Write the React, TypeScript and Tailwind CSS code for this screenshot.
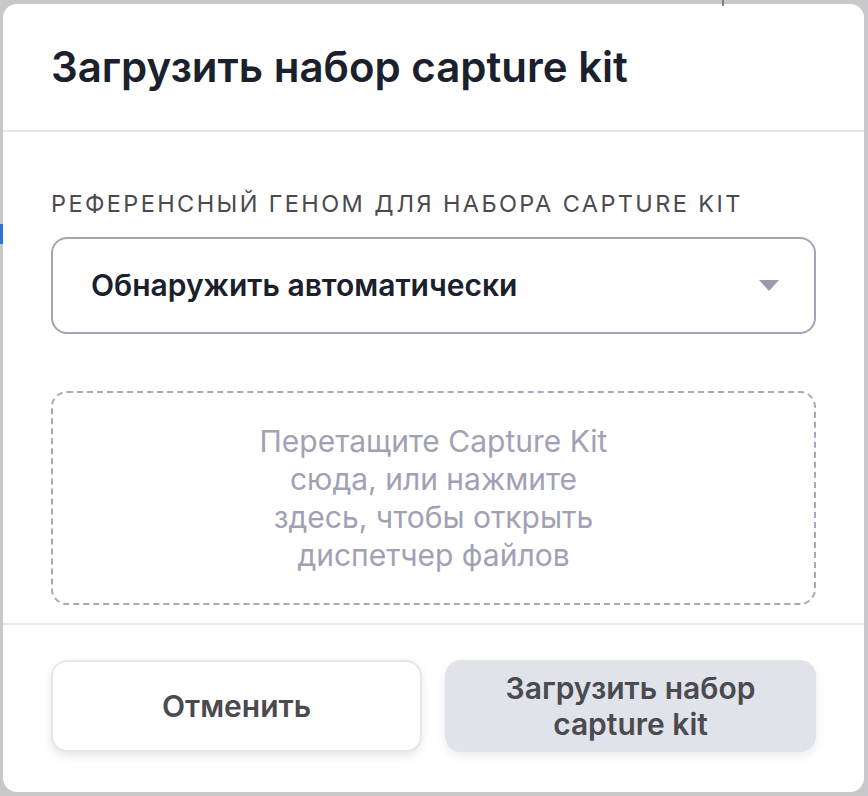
import React from "react";

export default function App() {
  return (
    <div
      className="relative h-[796px] w-[868px] overflow-hidden bg-[#c8c8ca] pt-[4px] pl-[3px] pr-[4px]"
      style={{ fontFamily: "Inter, 'Noto Sans', sans-serif" }}
    >
      <div className="absolute left-[722px] top-0 h-[6px] w-[2px] bg-[#7a7f8c]" />
      <div className="absolute left-0 top-[224px] h-[20px] w-[3px] bg-[#2f6fd6]" />
      <div className="flex h-[788px] flex-col rounded-[14px] bg-white">
        <div className="flex h-[128px] items-center border-b-2 border-[#e3e7ee] px-[48px]">
          <h1 className="text-[42px] font-semibold leading-none text-[#1a202c]">
            Загрузить набор capture kit
          </h1>
        </div>
        <div className="flex flex-col px-[48px] pt-[58px] pb-[18px]">
          <div className="text-[23.5px] leading-[28px] uppercase tracking-[2.4px] text-[#4a4a4f]">
            Референсный геном для набора capture kit
          </div>
          <div className="mt-[19px] flex h-[97px] items-center justify-between rounded-[16px] border-2 border-[#a3a3b5] pl-[38px] pr-[34px]">
            <span className="text-[30px] font-semibold text-[#1a202c]">Обнаружить автоматически</span>
            <svg width="22" height="14" viewBox="0 0 22 14">
              <path d="M1 1 L21 1 L11 12 Z" fill="#9a9aac" />
            </svg>
          </div>
          <div className="mt-[57px] flex h-[214px] items-center justify-center rounded-[16px] border-2 border-dashed border-[#a8a8b8]">
            <p className="w-[370px] text-center text-[30px] leading-[38px] text-[#a1a1b5]">
              Перетащите Capture Kit сюда, или нажмите здесь, чтобы открыть диспетчер файлов
            </p>
          </div>
        </div>
        <div className="grid flex-1 grid-cols-2 content-start gap-[23px] border-t-2 border-[#e3e7ee] px-[48px] pt-[35px]">
          <button className="flex h-[92px] items-center justify-center rounded-[16px] border-2 border-[#e2e6ee] bg-white text-[30px] font-semibold text-[#4a4a4f] shadow-[0_4px_10px_rgba(0,0,0,0.10)]">
            Отменить
          </button>
          <button className="flex h-[92px] items-center justify-center rounded-[16px] bg-[#e0e3ea] px-[40px] text-[30px] font-semibold leading-[36px] text-[#4a4a4f] shadow-[0_4px_10px_rgba(0,0,0,0.08)]">
            Загрузить набор capture kit
          </button>
        </div>
      </div>
    </div>
  );
}
